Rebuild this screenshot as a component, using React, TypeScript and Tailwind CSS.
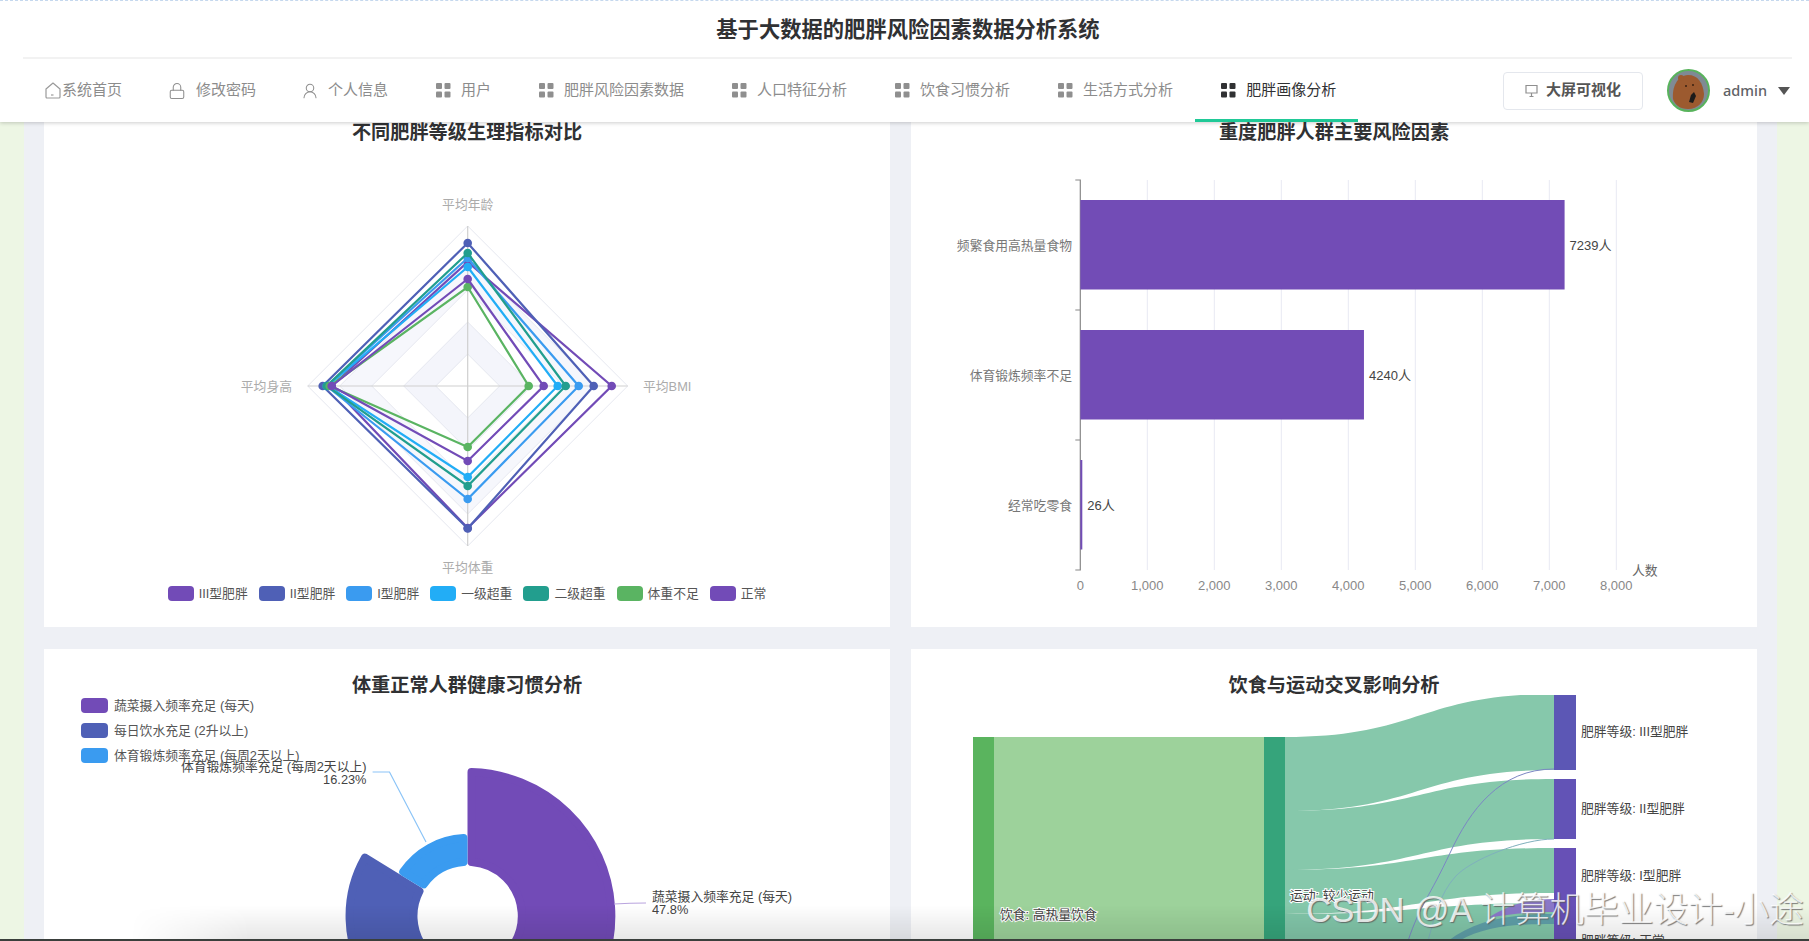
import { Lock, UserRound } from 'lucide-react'

const PURPLE = '#724bb7'

// сітка-іконка меню
function GridIcon({ active }: { active?: boolean }) {
  const fill = active ? '#303133' : '#8f8f8f'
  return (
    <svg width="15" height="15" viewBox="0 0 15 15" className="shrink-0">
      <rect x="0" y="0" width="6" height="6" rx="1" fill={fill} />
      <rect x="8.5" y="0" width="6" height="6" rx="1" fill={fill} />
      <rect x="0" y="8.5" width="6" height="6" rx="1" fill={fill} />
      <rect x="8.5" y="8.5" width="6" height="6" rx="1" fill={fill} />
    </svg>
  )
}

function HomeIcon() {
  return (
    <svg width="16" height="17" viewBox="0 0 16 17" fill="none" stroke="#9a9a9a" strokeWidth="1.2" className="shrink-0">
      <path d="M8 1 L15 7 V15 a1 1 0 0 1 -1 1 H2 a1 1 0 0 1 -1 -1 V7 Z" strokeLinejoin="round" />
      <path d="M6 13 H8.5" />
    </svg>
  )
}

const NAV = [
  { label: '系统首页', icon: <HomeIcon />, gap: 'gap-[1px]' },
  { label: '修改密码', icon: <Lock size={18} strokeWidth={1.4} color="#8f8f8f" className="-mx-[2px]" />, gap: 'gap-[12px]' },
  { label: '个人信息', icon: <UserRound size={18} strokeWidth={1.4} color="#8f8f8f" className="-mx-[3px]" />, gap: 'gap-[12px]' },
  { label: '用户', icon: <GridIcon />, gap: 'gap-[10px]' },
  { label: '肥胖风险因素数据', icon: <GridIcon />, gap: 'gap-[10px]' },
  { label: '人口特征分析', icon: <GridIcon />, gap: 'gap-[10px]' },
  { label: '饮食习惯分析', icon: <GridIcon />, gap: 'gap-[10px]' },
  { label: '生活方式分析', icon: <GridIcon />, gap: 'gap-[10px]' },
]

function Avatar() {
  return (
    <svg width="43" height="43" viewBox="0 0 43 43" className="shrink-0">
      <circle cx="21.5" cy="21.5" r="20.5" fill="#7f8a94" stroke="#58b35c" strokeWidth="2" />
      <path d="M6 30 C5 18 10 7 21 6 C31 6 36 14 37 25 C37 33 31 40 21 40 C13 40 8 36 6 30 Z" fill="#9c5a2f" />
      <circle cx="14" cy="9" r="3" fill="#9c5a2f" />
      <circle cx="19" cy="17" r="1" fill="#3a2012" />
      <circle cx="26" cy="16" r="1" fill="#3a2012" />
      <path d="M24 26 L27 23 L29 27 L26 34 L22 33 Z" fill="#1d1b1a" />
    </svg>
  )
}

function Header() {
  return (
    <header className="relative z-10 h-[122px] shrink-0 border-t border-dashed border-[#c5d8ee] bg-white shadow-[0_1px_4px_rgba(0,0,0,0.2)]">
      <div className="flex h-[56px] items-center justify-center pl-[7px] pt-[3px] text-[21.3px] font-bold text-[#303133]">
        基于大数据的肥胖风险因素数据分析系统
      </div>
      <div className="ml-[23px] mr-[17px] h-[2px] bg-[#f2f2f2]" />
      <div className="flex h-[63px] items-center pl-[45px] pr-[19px]">
        <nav className="flex h-full items-center gap-12 text-[15px] text-[#8c8c8c]">
          {NAV.map((n) => (
            <div key={n.label} className={`flex items-center ${n.gap}`}>
              {n.icon}
              <span>{n.label}</span>
            </div>
          ))}
          <div className="relative flex h-full items-center gap-[10px] text-[#303133]">
            <GridIcon active />
            <span>肥胖画像分析</span>
            <div className="absolute -left-[26px] -right-[22px] bottom-0 h-[3px] bg-[#20c997]" />
          </div>
        </nav>
        <div className="ml-auto flex h-[38px] w-[140px] items-center justify-center gap-[8px] rounded border border-[#e4e7ed] text-[15px] font-bold text-[#555]">
          <svg width="13" height="14" viewBox="0 0 13 14" fill="none" stroke="#8f8f8f" strokeWidth="1.2">
            <path d="M1 1.5 H12 V9 H1 Z M6.5 9 V12.5 M4.5 12.5 H8.5" />
          </svg>
          大屏可视化
        </div>
        <div className="ml-[24px] flex items-center">
          <Avatar />
          <span className="ml-[13px] font-['Noto_Sans',sans-serif] text-[14.5px] font-medium text-[#606266]">admin</span>
          <svg width="12" height="8" viewBox="0 0 12 8" className="ml-[11px]">
            <path d="M0 0 H12 L6 8 Z" fill="#555" />
          </svg>
        </div>
      </div>
    </header>
  )
}

function Card({ title, children, tall }: { title: string; children: React.ReactNode; tall?: boolean }) {
  return (
    <section className={`relative flex flex-col bg-white ${tall ? 'h-[505px]' : 'h-[400px] pt-[26px]'}`}>
      <h2 className="h-[21px] shrink-0 text-center text-[19.2px] font-bold leading-[22px] text-[#303133]">{title}</h2>
      {children}
    </section>
  )
}

// радар
const CX = 467.7
const CY = 386

const diamond = (t: number, r: number, b: number, l: number) =>
  `${CX},${CY - t} ${CX + r},${CY} ${CX},${CY + b} ${CX - l},${CY}`

const RADAR = [
  { name: 'III型肥胖', color: PURPLE, v: [124, 144, 142, 136] },
  { name: 'II型肥胖', color: '#4f60b6', v: [143, 126, 142.5, 145] },
  { name: 'I型肥胖', color: '#3a9bf0', v: [128, 111, 113, 141] },
  { name: '一级超重', color: '#22adf6', v: [119, 90, 91, 140] },
  { name: '二级超重', color: '#229e8e', v: [133, 98, 100, 141] },
  { name: '体重不足', color: '#5ab462', v: [99, 61, 61, 138] },
  { name: '正常', color: PURPLE, v: [107, 76, 75, 136] },
]

function RadarChart() {
  return (
    <svg width="846" height="438" viewBox="44 143 846 438" className="block shrink-0">
      <polygon points={diamond(128, 128, 128, 128)} fill="#f6f7fc" />
      <polygon points={diamond(96, 96, 96, 96)} fill="#fff" />
      <polygon points={diamond(64, 64, 64, 64)} fill="#f4f5fb" />
      <polygon points={diamond(32, 32, 32, 32)} fill="#fff" />
      {[32, 64, 96, 128, 160].map((r) => (
        <polygon key={r} points={diamond(r, r, r, r)} fill="none" stroke="#e6e8f0" strokeWidth="1" />
      ))}
      <path d={`M${CX} ${CY - 160} V${CY + 160} M${CX - 160} ${CY} H${CX + 160}`} stroke="#cfcfcf" strokeWidth="1.2" />
      {RADAR.map((s) => (
        <g key={s.name}>
          <polygon points={diamond(s.v[0], s.v[1], s.v[2], s.v[3])} fill="none" stroke={s.color} strokeWidth="2.2" />
          <circle cx={CX} cy={CY - s.v[0]} r="4.3" fill={s.color} />
          <circle cx={CX + s.v[1]} cy={CY} r="4.3" fill={s.color} />
          <circle cx={CX} cy={CY + s.v[2]} r="4.3" fill={s.color} />
          <circle cx={CX - s.v[3]} cy={CY} r="4.3" fill={s.color} />
        </g>
      ))}
      <g fontSize="12.8" fill="#ababab" dominantBaseline="middle" transform="translate(0 1.5)">
        <text x={CX} y="204" textAnchor="middle">平均年龄</text>
        <text x="643" y="386">平均BMI</text>
        <text x="292" y="386" textAnchor="end">平均身高</text>
        <text x={CX} y="567" textAnchor="middle">平均体重</text>
      </g>
    </svg>
  )
}

function RadarLegend() {
  return (
    <div className="mt-[5px] flex items-center justify-center gap-[11px] text-[12.8px] leading-[15px] text-[#555]">
      {RADAR.map((s) => (
        <div key={s.name} className="flex items-center gap-[5px]">
          <span className="h-[15px] w-[26px] rounded" style={{ backgroundColor: s.color }} />
          <span>{s.name}</span>
        </div>
      ))}
    </div>
  )
}

// стовпчики
const BAR_X = 1080.3
const BAR_UNIT = 0.0669
const TICK = 67
const BARS = [
  { label: '频繁食用高热量食物', value: 7239, y: 200 },
  { label: '体育锻炼频率不足', value: 4240, y: 330 },
  { label: '经常吃零食', value: 26, y: 460 },
]

function BarChart() {
  return (
    <svg width="846" height="484" viewBox="911 143 846 484" className="block shrink-0">
      {[1, 2, 3, 4, 5, 6, 7, 8].map((k) => (
        <line key={k} x1={BAR_X + k * TICK} x2={BAR_X + k * TICK} y1="180" y2="570" stroke="#e8e9f3" />
      ))}
      <path d={`M${BAR_X - 5} 180 H${BAR_X} V570 H${BAR_X - 5} M${BAR_X - 5} 310 H${BAR_X} M${BAR_X - 5} 440 H${BAR_X}`} fill="none" stroke="#888" strokeWidth="1.2" />
      {BARS.map((b) => (
        <g key={b.label}>
          <rect x={BAR_X} y={b.y} width={Math.max(b.value * BAR_UNIT, 2)} height="89.5" fill="#724cb6" />
          <text x="1072" y={b.y + 46.5} textAnchor="end" fontSize="12.8" fill="#777" dominantBaseline="middle">{b.label}</text>
          <text x={BAR_X + Math.max(b.value * BAR_UNIT, 2) + 5} y={b.y + 46.5} fontSize="13" fill="#444" dominantBaseline="middle">{b.value}人</text>
        </g>
      ))}
      <g fontSize="13" fill="#888" textAnchor="middle" dominantBaseline="middle">
        {['0', '1,000', '2,000', '3,000', '4,000', '5,000', '6,000', '7,000', '8,000'].map((t, i) => (
          <text key={t} x={BAR_X + i * TICK} y="587">{t}</text>
        ))}
      </g>
      <text x="1632" y="572" fontSize="12.8" fill="#666" dominantBaseline="middle">人数</text>
    </svg>
  )
}

// пелюсткова діаграма
const DX = 467.5
const DY = 916

function sector(from: number, to: number, r0: number, r1: number) {
  const pt = (r: number, deg: number, off: number) => {
    const a = (deg * Math.PI) / 180 + off / r
    return `${(DX + r * Math.sin(a)).toFixed(1)} ${(DY - r * Math.cos(a)).toFixed(1)}`
  }
  const large = to - from > 180 ? 1 : 0
  const i = r0 + 4
  const o = r1 - 4
  return `M${pt(i, from, 4)} L${pt(o, from, 4)} A${o} ${o} 0 ${large} 1 ${pt(o, to, -4)} L${pt(i, to, -4)} A${i} ${i} 0 ${large} 0 ${pt(i, from, 4)} Z`
}

const ROSE = [
  { from: 0, to: 172, r: 148, color: PURPLE },
  { from: 172, to: 301.6, r: 122, color: '#4f60b6' },
  { from: 301.6, to: 360, r: 82, color: '#3a9bf0' },
]

function RoseChart() {
  return (
    <svg width="846" height="306" viewBox="44 695 846 306" className="absolute left-0 top-[46px]">
      {ROSE.map((s) => (
        <path key={s.color} d={sector(s.from, s.to, 50, s.r)} fill={s.color} stroke={s.color} strokeWidth="8" strokeLinejoin="round" />
      ))}
      <path d="M426 842 L389.5 772 H372.6" fill="none" stroke="#8bc4f7" strokeWidth="1.2" />
      <path d="M614 904 Q630 903 646 903" fill="none" stroke="#b9a4de" strokeWidth="1.2" />
      <g fontSize="12.8" fill="#444" dominantBaseline="middle" transform="translate(0 1)">
        <text x="366.5" y="767" textAnchor="end">体育锻炼频率充足 (每周2天以上)</text>
        <text x="366.5" y="780" textAnchor="end">16.23%</text>
        <text x="652" y="897">蔬菜摄入频率充足 (每天)</text>
        <text x="652" y="910">47.8%</text>
      </g>
    </svg>
  )
}

function RoseLegend() {
  const items = [
    { name: '蔬菜摄入频率充足 (每天)', color: PURPLE },
    { name: '每日饮水充足 (2升以上)', color: '#4f60b6' },
    { name: '体育锻炼频率充足 (每周2天以上)', color: '#3a9bf0' },
  ]
  return (
    <div className="absolute left-[37px] top-[49px] flex flex-col gap-[10px] text-[12.8px] leading-[15px] text-[#555]">
      {items.map((it) => (
        <div key={it.name} className="flex items-center gap-[6px]">
          <span className="h-[15px] w-[27px] rounded" style={{ backgroundColor: it.color }} />
          <span>{it.name}</span>
        </div>
      ))}
    </div>
  )
}

// санкі
function flow(x0: number, t0: number, b0: number, x1: number, t1: number, b1: number) {
  const m = (x0 + x1) / 2
  return `M${x0} ${t0} C${m} ${t0} ${m} ${t1} ${x1} ${t1} L${x1} ${b1} C${m} ${b1} ${m} ${b0} ${x0} ${b0} Z`
}

function SankeyChart() {
  const halo = { stroke: '#fff', strokeWidth: 2, paintOrder: 'stroke' as const }
  return (
    <svg width="846" height="306" viewBox="911 695 846 306" className="absolute left-0 top-[46px]">
      <rect x="994" y="737" width="270" height="264" fill="#9dd29b" />
      <path d={flow(1285, 737, 811, 1554, 694, 770)} fill="#86c8ab" />
      <path d={flow(1285, 811, 870, 1554, 779, 839)} fill="#86c8ab" />
      <path d={flow(1285, 870, 914, 1554, 848, 893)} fill="#86c8ab" />
      <path d="M1285 914 C1420 914 1420 903 1554 903 V1001 H1285 Z" fill="#82c6a9" />
      <path d="M1554 899 C1530 899 1510 904 1488 918 C1510 914 1530 912 1554 912 Z" fill="#8a78c8" />
      <path d="M1554 914 C1510 914 1475 920 1448 941 L1459 941 C1485 926 1515 924 1554 924 Z" fill="#5f9fa8" />
      <path d="M1554 769 C1500 769 1470 810 1450 853 S1420 905 1408 941" fill="none" stroke="#7b86c4" />
      <path d="M1554 839 C1522 839 1470 860 1455 877 S1435 915 1428 941" fill="none" stroke="#7fb0bd" />
      <rect x="973" y="737" width="21" height="264" fill="#5ab45e" />
      <rect x="1264" y="737" width="21" height="264" fill="#36a47b" />
      <rect x="1554" y="694" width="22" height="76" fill="#5c57b5" />
      <rect x="1554" y="779" width="22" height="60" fill="#6253b6" />
      <rect x="1554" y="848" width="22" height="153" fill="#6750b6" />
      <g fontSize="12.8" fill="#444" dominantBaseline="middle" transform="translate(0 1)">
        <text x="1000" y="915" {...halo}>饮食: 高热量饮食</text>
        <text x="1290" y="896" {...halo}>运动: 较少运动</text>
        <text x="1581" y="732">肥胖等级: III型肥胖</text>
        <text x="1581" y="809">肥胖等级: II型肥胖</text>
        <text x="1581" y="876">肥胖等级: I型肥胖</text>
        <text x="1581" y="941">肥胖等级: 正常</text>
      </g>
    </svg>
  )
}

export default function App() {
  return (
    <div className="relative flex h-[941px] w-[1809px] flex-col overflow-hidden bg-[#edf6e4] font-['Liberation_Sans','Noto_Sans_CJK_SC',sans-serif]">
      <Header />
      <main className="ml-[24px] mr-[32px] grid flex-1 grid-cols-2 content-start gap-x-[21px] gap-y-[22px] overflow-hidden bg-[#eef0f5] px-[20px]">
        <Card title="不同肥胖等级生理指标对比" tall>
          <RadarChart />
          <RadarLegend />
        </Card>
        <Card title="重度肥胖人群主要风险因素" tall>
          <BarChart />
        </Card>
        <Card title="体重正常人群健康习惯分析">
          <RoseChart />
          <RoseLegend />
        </Card>
        <Card title="饮食与运动交叉影响分析">
          <SankeyChart />
        </Card>
      </main>
      {/* затемнення внизу кадру */}
      <div className="pointer-events-none absolute bottom-0 left-[130px] right-0 h-[36px] bg-gradient-to-b from-transparent to-black/10 [mask-image:linear-gradient(to_right,transparent,black_120px)]" />
      <div className="absolute bottom-0 left-0 right-0 h-[2px] bg-[#3a3f3c]" />
      <div className="absolute bottom-[13px] right-[5px] text-[34.7px] font-light leading-[36px] text-white/80 [text-shadow:1px_1px_1px_rgba(90,90,90,0.8)]">
        CSDN @A 计算机毕业设计-小途
      </div>
    </div>
  )
}
